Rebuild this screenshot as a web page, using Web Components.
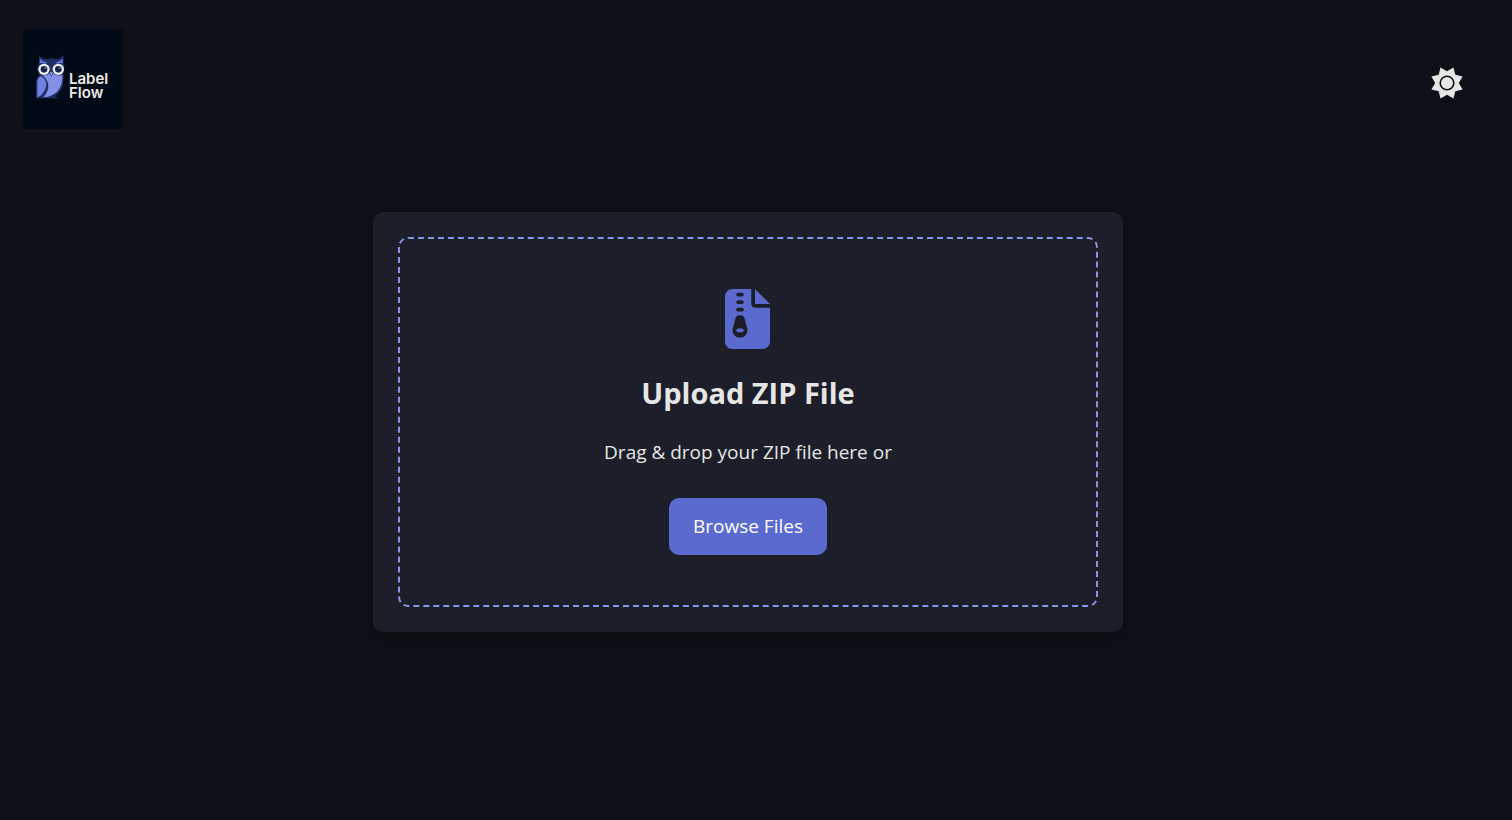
<!DOCTYPE html>
<html lang="en">
<head>
<meta charset="utf-8">
<meta name="viewport" content="width=device-width, initial-scale=1">
<title>Label Flow</title>
<style>
:root {
  --page: #0d1117;
  --card: #1c1f29;
  --accent: #5a6acf;
  --accent-soft: #8b95e6;
  --text: #e6e6e6;
}
body {
  margin: 0;
  background: var(--page);
  color: var(--text);
  font-family: "Open Sans", "Noto Sans", sans-serif;
}
</style>
</head>
<body>
<label-flow-app></label-flow-app>

<script>
const define = (name, html, setup) => {
  const template = document.createElement("template");
  template.innerHTML = html;
  customElements.define(name, class extends HTMLElement {
    constructor() {
      super();
      this.attachShadow({ mode: "open" }).append(template.content.cloneNode(true));
      if (setup) setup(this.shadowRoot);
    }
  });
};

define("brand-logo", `
<style>
  :host { display: block; }
  a {
    box-sizing: border-box;
    display: flex;
    align-items: flex-end;
    gap: 4px;
    width: 100px;
    height: 100px;
    padding: 0 0 29px 12px;
    border-radius: 4px;
    background: #020917;
    color: #f0ece6;
    text-decoration: none;
    font: 600 15px/14px Inter, sans-serif;
  }
  svg { flex: none; width: 30px; height: 45px; }
</style>
<a href="#">
  <svg viewBox="0 0 90 135" aria-hidden="true">
    <path fill="#202f66" d="M12 1 C20 10 29 13 37 12 Q49 7 60 12 C69 13 77 10 86 1 L86 22 Q90 32 87 42 Q85 52 86 64 C87 91 79 111 60 124 L72 130 H3 V81 Q3 68 13 60 Q5 49 7 38 Q9 31 12 23Z"/>
    <path fill="#6473d5" d="M15 11 Q24 20 37 23 L31 26 Q21 22 14 25Z M83 11 Q74 20 61 23 L67 26 Q77 22 84 25Z"/>
    <path fill="#8490e6" d="M23 61 Q38 62 43 54 L49 65 L54 55 Q65 65 82 59 C84 91 72 115 39 125 L25 127 C48 104 43 78 23 61Z"/>
    <path fill="#7280df" d="M18 63 C39 75 40 98 16 123 L7 127 V82 Q7 70 18 63Z"/>
    <circle cx="27" cy="43" r="17" fill="#f0eee8"/>
    <circle cx="70" cy="43" r="17" fill="#f0eee8"/>
    <circle cx="27" cy="43" r="10" fill="#142451"/>
    <circle cx="70" cy="43" r="10" fill="#142451"/>
    <circle cx="31" cy="39" r="3" fill="#68779f"/>
    <circle cx="74" cy="39" r="3" fill="#68779f"/>
    <path fill="#8490e6" d="M44 52 Q49 49 54 52 L49 63Z"/>
  </svg>
  <span>Label Flow</span>
</a>`);

define("theme-toggle", `
<style>
  :host { display: block; }
  button {
    display: block;
    padding: 0;
    border: 0;
    background: none;
    color: var(--text);
    cursor: pointer;
  }
  svg { display: block; width: 34px; height: 34px; }
</style>
<button type="button" aria-label="Toggle theme">
  <svg viewBox="-17 -17 34 34" aria-hidden="true">
    <path class="rays" fill="currentColor"/>
    <circle r="6.8" fill="none" stroke="#0d1117" stroke-width="1.6"/>
  </svg>
</button>`, root => {
  const points = Array.from({ length: 16 }, (_, i) => {
    const angle = i * Math.PI / 8;
    const radius = i % 2 ? 16.9 : 11.8;
    return (radius * Math.cos(angle)).toFixed(2) + " " + (radius * Math.sin(angle)).toFixed(2);
  });
  root.querySelector(".rays").setAttribute("d", "M" + points.join("L") + "Z");
});

define("app-header", `
<style>
  :host {
    display: flex;
    align-items: center;
    justify-content: space-between;
    padding: 29px 48px 0 23px;
  }
  ::slotted(theme-toggle) { margin-top: 8px; }
</style>
<slot></slot>`);

define("zip-icon", `
<style>
  :host { display: block; color: var(--accent); }
  svg { display: block; width: 46px; height: 60px; }
</style>
<svg viewBox="0 0 384 512" preserveAspectRatio="xMinYMid" fill="currentColor" aria-hidden="true">
  <path d="M64 0C28.700 0 0 28.700 0 64V448c0 35.300 28.700 64 64 64H320c35.300 0 64-28.700 64-64V160H256c-17.700 0-32-14.300-32-32V0H64zM256 0V128H384L256 0zM96 48c0-8.800 7.200-16 16-16h32c8.800 0 16 7.200 16 16s-7.200 16-16 16H112c-8.800 0-16-7.200-16-16zm0 64c0-8.800 7.200-16 16-16h32c8.800 0 16 7.200 16 16s-7.200 16-16 16H112c-8.800 0-16-7.200-16-16zm0 64c0-8.800 7.200-16 16-16h32c8.800 0 16 7.200 16 16s-7.200 16-16 16H112c-8.800 0-16-7.200-16-16zm-6.300 71.800c3.700-14 16.400-23.800 30.900-23.800h14.800c14.500 0 27.200 9.700 30.900 23.800l23.500 88.200c1.400 5.400 2.100 10.900 2.100 16.400c0 35.200-28.800 63.700-64 63.700s-64-28.500-64-63.700c0-5.500 .7-11.100 2.100-16.400l23.500-88.200zM112 336c-8.800 0-16 7.200-16 16s7.200 16 16 16h32c8.800 0 16-7.200 16-16s-7.200-16-16-16H112z"/>
</svg>`);

define("browse-button", `
<style>
  :host { display: block; }
  button {
    display: block;
    padding: 15px 24px;
    border: 0;
    border-radius: 10px;
    background: var(--accent);
    color: #fff;
    font: inherit;
    font-size: 19px;
    line-height: 27px;
    cursor: pointer;
  }
</style>
<button type="button"><slot></slot></button>`);

define("upload-card", `
<style>
  :host {
    box-sizing: border-box;
    display: block;
    width: 100%;
    max-width: 750px;
    padding: 25px;
    border-radius: 10px;
    background: var(--card);
    box-shadow: 0 4px 12px rgba(0, 0, 0, 0.3);
  }
  section {
    display: flex;
    flex-direction: column;
    align-items: center;
    padding: 50px;
    border: 2px dashed var(--accent-soft);
    border-radius: 10px;
    text-align: center;
  }
  h2 { margin: 24px 0; font-size: 29px; line-height: 40px; font-weight: 700; }
  p { margin: 0 0 31px; font-size: 19px; line-height: 30px; }
</style>
<section aria-labelledby="title">
  <zip-icon></zip-icon>
  <h2 id="title"><slot name="title"></slot></h2>
  <p><slot name="hint"></slot></p>
  <slot></slot>
</section>`);

define("label-flow-app", `
<style>
  :host { display: block; }
  main {
    display: flex;
    justify-content: center;
    padding: 83px 16px 40px 0;
  }
</style>
<app-header>
  <brand-logo></brand-logo>
  <theme-toggle></theme-toggle>
</app-header>
<main>
  <upload-card>
    <span slot="title">Upload ZIP File</span>
    <span slot="hint">Drag &amp; drop your ZIP file here or</span>
    <browse-button>Browse Files</browse-button>
  </upload-card>
</main>`);
</script>
</body>
</html>
